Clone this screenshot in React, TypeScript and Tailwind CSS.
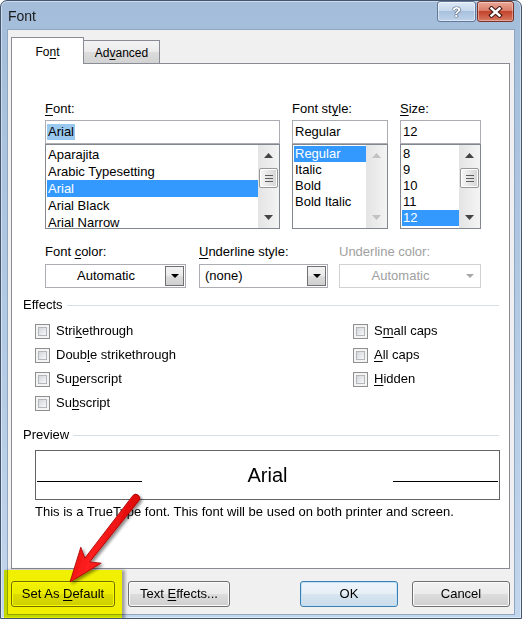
import React from "react";

// access-key label: underline one letter
const Key = ({ text, at }: { text: string; at: number }) => (
  <>
    {text.slice(0, at)}
    <span className="underline decoration-1 underline-offset-2">{text[at]}</span>
    {text.slice(at + 1)}
  </>
);

const Tri = ({ up, color = "#000", w = 8, h = 4 }: { up?: boolean; color?: string; w?: number; h?: number }) => (
  <svg width={w} height={h} viewBox={`0 0 ${w} ${h}`}>
    <path d={up ? `M0 ${h} L${w / 2} 0 L${w} ${h} Z` : `M0 0 L${w} 0 L${w / 2} ${h} Z`} fill={color} />
  </svg>
);

const ScrollBar = ({ thumb, disabled }: { thumb?: boolean; disabled?: boolean }) => {
  const c = disabled ? "#c2c2c2" : "#444444";
  return (
    <div className="flex w-[21px] shrink-0 flex-col bg-linear-to-r from-[#e4e4e4] to-[#f4f4f4]">
      <div className="flex h-[21px] items-center justify-center">
        <Tri up color={c} w={9} h={5} />
      </div>
      {thumb && (
        <div className="mx-px mt-[2px] flex h-[20px] flex-col items-center justify-center gap-[2px] rounded-[2px] border border-[#979797] bg-linear-to-r from-[#f6f6f6] to-[#d5d5d5] shadow-[inset_0_0_0_1px_#ffffff]">
          {[0, 1, 2].map((i) => (
            <div key={i} className="h-px w-[8px] bg-[#5e5e5e]" />
          ))}
        </div>
      )}
      <div className="flex-1" />
      <div className="flex h-[21px] items-center justify-center">
        <Tri color={c} w={9} h={5} />
      </div>
    </div>
  );
};

const ListBox = ({
  items,
  selected,
  rowClass,
  thumb,
  disabled,
}: {
  items: string[];
  selected: number;
  rowClass: string;
  thumb?: boolean;
  disabled?: boolean;
}) => (
  <div className="flex h-[85px] border border-[#828790] bg-white">
    <div className="flex-1 overflow-hidden pl-px pt-px">
      {items.map((it, i) => (
        <div
          key={it}
          className={`${rowClass} whitespace-nowrap pl-px ${i === selected ? "bg-[#3399ff] text-white" : ""}`}
        >
          {it}
        </div>
      ))}
    </div>
    <ScrollBar thumb={thumb} disabled={disabled} />
  </div>
);

const Combo = ({ text, center, disabled }: { text: string; center?: boolean; disabled?: boolean }) => (
  <div className={`flex h-[24px] border bg-white p-px ${disabled ? "border-[#d2d2d2]" : "border-[#abadb3]"}`}>
    <div
      className={`flex flex-1 items-center ${center ? "justify-center" : "pl-[4px]"} ${disabled ? "text-[#a0a0a0]" : ""}`}
    >
      {text}
    </div>
    {disabled ? (
      <div className="flex w-[19px] items-center justify-center">
        <Tri color="#a8a8a8" />
      </div>
    ) : (
      <div className="flex w-[19px] items-center justify-center border border-[#707070] bg-[linear-gradient(#f2f2f2,#ebebeb_50%,#dddddd_50%,#cfcfcf)]">
        <Tri color="#000" />
      </div>
    )}
  </div>
);

const Check = ({ label }: { label: React.ReactNode }) => (
  <div className="flex items-center gap-[6px]">
    <div className="h-[15px] w-[15px] shrink-0 border border-[#8e8f8f] bg-[#f4f4f4] p-[2px]">
      <div className="h-full w-full border border-[#b3b7bc] bg-linear-to-br from-[#d3d7dc] to-[#f8f8f8]" />
    </div>
    <span>{label}</span>
  </div>
);

const Btn = ({ children, w, def }: { children: React.ReactNode; w: string; def?: boolean }) => (
  <div
    className={`flex h-[26px] ${w} items-center justify-center rounded-[3px] border ${
      def
        ? "border-[#3c7fb1] bg-[linear-gradient(#eef5fa,#e6eff6_50%,#d7e5f0_50%,#cbdcea)] shadow-[inset_0_0_0_1px_#bfe2f8]"
        : "border-[#707070] bg-[linear-gradient(#f2f2f2,#ebebeb_50%,#dddddd_50%,#cfcfcf)] shadow-[inset_0_0_0_1px_#fbfbfb]"
    }`}
  >
    {children}
  </div>
);

const GroupLabel = ({ text }: { text: string }) => (
  <div className="flex h-[14px] items-center leading-[14px]">
    <span>{text}</span>
    <div className="ml-[4px] h-px flex-1 bg-[#d5dfe5]" />
  </div>
);

export default function App() {
  return (
    <div className="relative h-[619px] w-[522px] overflow-hidden rounded-t-[7px] border border-[#44566e] bg-linear-to-b from-[#a3bdda] to-[#c2d6ed] font-['Liberation_Sans',Arial,sans-serif] text-[13px] text-black shadow-[inset_0_0_0_1px_rgba(255,255,255,0.45)]">
      {/* title bar */}
      <div className="flex h-[28px] pr-[7px]">
        <div className="ml-[7px] mt-[7px] h-[16px] text-[14px] leading-[16px] text-[#1b1b1b]">Font</div>
        <div className="flex-1" />
        <div className="flex gap-px">
          <div className="flex h-[21px] w-[39px] items-center justify-center rounded-[3px] border border-[#62789a] bg-[linear-gradient(#dde8f5,#c6d8ec_45%,#a9c1de_50%,#bed3ea)] shadow-[inset_0_0_0_1px_rgba(255,255,255,0.5)]">
            <span className="text-[15px] font-bold leading-none text-white [text-shadow:0_0_1px_#24344a,0_0_1px_#24344a,0_0_1px_#24344a]">
              ?
            </span>
          </div>
          <div className="flex h-[21px] w-[37px] items-center justify-center rounded-[3px] border border-[#7b3328] bg-[linear-gradient(#eaa999,#d97c68_45%,#c4432c_50%,#d67a62)] shadow-[inset_0_0_0_1px_rgba(255,255,255,0.35)]">
            <svg width="15" height="12" viewBox="0 0 15 12">
              <path d="M3.5 2.5 L11.5 9.5 M11.5 2.5 L3.5 9.5" stroke="#3d1510" strokeWidth="4.4" strokeLinecap="square" />
              <path d="M3.5 2.5 L11.5 9.5 M11.5 2.5 L3.5 9.5" stroke="#ffffff" strokeWidth="2.4" strokeLinecap="square" />
            </svg>
          </div>
        </div>
      </div>

      {/* dialog body */}
      <div className="mx-[6px] flex h-[586px] flex-col border border-[#8fa5c0] bg-[#f0f0f0] pl-[3px] pr-[4px] pt-[7px]">
        {/* tabs */}
        <div className="flex h-[26px] items-end">
          <div className="relative z-10 -mb-px flex h-[27px] w-[73px] items-center justify-center border border-b-0 border-[#898c95] bg-white pt-[2px] text-[12px]">
            <span>
              <Key text="Font" at={2} />
            </span>
          </div>
          <div className="flex h-[23px] w-[76px] items-center justify-center border border-b-0 border-l-0 border-[#898c95] bg-[linear-gradient(#f3f3f3,#ebebeb_50%,#dddddd_50%,#d2d2d2)] pt-[2px] text-[12px]">
            <span>
              <Key text="Advanced" at={2} />
            </span>
          </div>
        </div>

        {/* tab panel */}
        <div className="flex h-[506px] flex-col border border-[#898c95] bg-white pl-[11px] pr-[10px]">
          {/* font / style / size */}
          <div className="ml-[22px] mt-[38px] flex gap-[12px]">
            <div className="flex w-[235px] flex-col">
              <div className="mb-[4px] h-[14px] leading-[14px]">
                <Key text="Font:" at={0} />
              </div>
              <div className="flex h-[24px] items-center border border-[#abadb3] bg-white pl-px">
                <span className="h-[16px] bg-[#99c9ef] px-px leading-[16px]">Arial</span>
              </div>
              <ListBox
                items={["Aparajita", "Arabic Typesetting", "Arial", "Arial Black", "Arial Narrow"]}
                selected={2}
                rowClass="h-[17px] leading-[17px]"
                thumb
              />
            </div>
            <div className="flex w-[96px] flex-col">
              <div className="mb-[4px] h-[14px] leading-[14px]">
                <Key text="Font style:" at={7} />
              </div>
              <div className="flex h-[24px] items-center border border-[#abadb3] bg-white pl-[2px]">Regular</div>
              <ListBox
                items={["Regular", "Italic", "Bold", "Bold Italic"]}
                selected={0}
                rowClass="h-[16px] leading-[16px]"
                disabled
              />
            </div>
            <div className="flex w-[81px] flex-col">
              <div className="mb-[4px] h-[14px] leading-[14px]">
                <Key text="Size:" at={0} />
              </div>
              <div className="flex h-[24px] items-center border border-[#abadb3] bg-white pl-[2px]">12</div>
              <ListBox
                items={["8", "9", "10", "11", "12"]}
                selected={4}
                rowClass="h-[16px] leading-[16px]"
                thumb
              />
            </div>
          </div>

          {/* colour / underline */}
          <div className="ml-[22px] mt-[16px] flex">
            <div className="w-[141px]">
              <div className="mb-[5px] h-[14px] leading-[14px]">
                <Key text="Font color:" at={5} />
              </div>
              <Combo text="Automatic" center />
            </div>
            <div className="ml-[13px] w-[129px]">
              <div className="mb-[5px] h-[14px] leading-[14px]">
                <Key text="Underline style:" at={0} />
              </div>
              <Combo text="(none)" />
            </div>
            <div className="ml-[11px] w-[142px]">
              <div className="mb-[5px] h-[14px] leading-[14px] text-[#a0a0a0]">Underline color:</div>
              <Combo text="Automatic" center disabled />
            </div>
          </div>

          {/* effects */}
          <div className="mt-[10px]">
            <GroupLabel text="Effects" />
          </div>
          <div className="ml-[12px] mt-[7px] grid grid-cols-[318px_1fr] grid-rows-[repeat(4,24px)]">
            <Check label={<Key text="Strikethrough" at={4} />} />
            <Check label={<Key text="Small caps" at={1} />} />
            <Check label={<Key text="Double strikethrough" at={4} />} />
            <Check label={<Key text="All caps" at={0} />} />
            <Check label={<Key text="Superscript" at={2} />} />
            <Check label={<Key text="Hidden" at={0} />} />
            <Check label={<Key text="Subscript" at={2} />} />
          </div>

          {/* preview */}
          <div className="mt-[13px]">
            <GroupLabel text="Preview" />
          </div>
          <div className="ml-[12px] mt-[8px] h-[50px] w-[465px] border border-[#646464] bg-white">
            <div className="flex items-baseline px-px pt-[14px]">
              <div className="h-px w-[105px] bg-black" />
              <span className="flex-1 text-center text-[20px] leading-[20px]">Arial</span>
              <div className="h-px w-[105px] bg-black" />
            </div>
          </div>
          <div className="ml-[12px] mt-[5px] h-[14px] leading-[14px]">
            This is a TrueType font. This font will be used on both printer and screen.
          </div>
        </div>

        {/* buttons */}
        <div className="mt-[12px] flex">
          <Btn w="w-[104px]">
            <span>
              <Key text="Set As Default" at={7} />
            </span>
          </Btn>
          <div className="ml-[13px]">
            <Btn w="w-[102px]">
              <span>
                <Key text="Text Effects..." at={5} />
              </span>
            </Btn>
          </div>
          <div className="flex-1" />
          <Btn w="w-[98px]" def>
            OK
          </Btn>
          <div className="ml-[14px]">
            <Btn w="w-[98px]">Cancel</Btn>
          </div>
        </div>
      </div>

      {/* yellow highlight annotation */}
      <div className="pointer-events-none absolute left-[3px] top-[569px] h-[50px] w-[118px] bg-[#ffff00] mix-blend-multiply shadow-[3px_0_3px_rgba(0,0,0,0.35)]" />

      {/* red arrow annotation */}
      <svg
        className="pointer-events-none absolute left-[-1px] top-[-1px]"
        width="522"
        height="619"
        viewBox="0 0 522 619"
      >
        <defs>
          <filter id="sh" x="-30%" y="-30%" width="160%" height="160%">
            <feDropShadow dx="2" dy="2" stdDeviation="1.5" floodColor="#000" floodOpacity="0.45" />
          </filter>
          <linearGradient id="rg" x1="0" y1="0" x2="1" y2="0.4">
            <stop offset="0" stopColor="#d40000" />
            <stop offset="0.5" stopColor="#ff2020" />
            <stop offset="1" stopColor="#d00000" />
          </linearGradient>
        </defs>
        <path
          d="M132.9 495.5 L84.9 558.1 L80.8 547.2 L70 582 L101.2 563.2 L89.7 561.9 L139.1 500.5 A4 4 0 0 0 132.9 495.5 Z"
          fill="url(#rg)"
          stroke="#a80000"
          strokeWidth="0.8"
          strokeLinejoin="round"
          filter="url(#sh)"
        />
      </svg>
    </div>
  );
}
